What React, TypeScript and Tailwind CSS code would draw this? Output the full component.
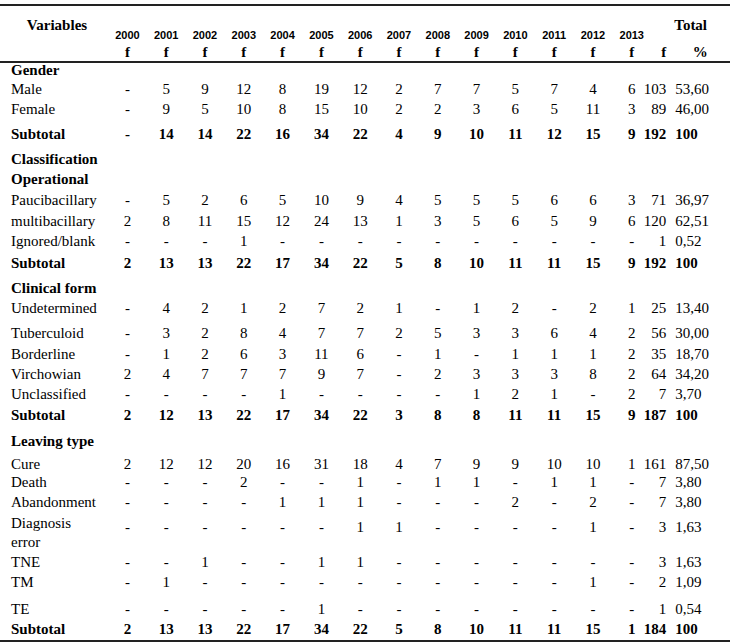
import React from "react";

type Row = {
  label: string;
  label2?: string;
  v?: string[];
  t?: string;
  p?: string;
  bold?: boolean;
  h: string;
  vpt?: string;
};

const d = "-";

const rows: Row[] = [
  { label: "Gender", bold: true, h: "h-[19px]" },
  { label: "Male", v: [d, "5", "9", "12", "8", "19", "12", "2", "7", "7", "5", "7", "4", "6"], t: "103", p: "53,60", h: "h-[20px]" },
  { label: "Female", v: [d, "9", "5", "10", "8", "15", "10", "2", "2", "3", "6", "5", "11", "3"], t: "89", p: "46,00", h: "h-[25px]" },
  { label: "Subtotal", bold: true, v: [d, "14", "14", "22", "16", "34", "22", "4", "9", "10", "11", "12", "15", "9"], t: "192", p: "100", h: "h-[25px]" },
  { label: "Classification", bold: true, h: "h-[20px]" },
  { label: "Operational", bold: true, h: "h-[21px]" },
  { label: "Paucibacillary", v: [d, "5", "2", "6", "5", "10", "9", "4", "5", "5", "5", "6", "6", "3"], t: "71", p: "36,97", h: "h-[21px]" },
  { label: "multibacillary", v: ["2", "8", "11", "15", "12", "24", "13", "1", "3", "5", "6", "5", "9", "6"], t: "120", p: "62,51", h: "h-[20px]" },
  { label: "Ignored/blank", v: [d, d, d, "1", d, d, d, d, d, d, d, d, d, d], t: "1", p: "0,52", h: "h-[22px]" },
  { label: "Subtotal", bold: true, v: ["2", "13", "13", "22", "17", "34", "22", "5", "8", "10", "11", "11", "15", "9"], t: "192", p: "100", h: "h-[25px]" },
  { label: "Clinical form", bold: true, h: "h-[20px]" },
  { label: "Undetermined", v: [d, "4", "2", "1", "2", "7", "2", "1", d, "1", "2", d, "2", "1"], t: "25", p: "13,40", h: "h-[25px]" },
  { label: "Tuberculoid", v: [d, "3", "2", "8", "4", "7", "7", "2", "5", "3", "3", "6", "4", "2"], t: "56", p: "30,00", h: "h-[21px]" },
  { label: "Borderline", v: [d, "1", "2", "6", "3", "11", "6", d, "1", d, "1", "1", "1", "2"], t: "35", p: "18,70", h: "h-[20px]" },
  { label: "Virchowian", v: ["2", "4", "7", "7", "7", "9", "7", d, "2", "3", "3", "3", "8", "2"], t: "64", p: "34,20", h: "h-[20px]" },
  { label: "Unclassified", v: [d, d, d, d, "1", d, d, d, d, "1", "2", "1", d, "2"], t: "7", p: "3,70", h: "h-[21px]" },
  { label: "Subtotal", bold: true, v: ["2", "12", "13", "22", "17", "34", "22", "3", "8", "8", "11", "11", "15", "9"], t: "187", p: "100", h: "h-[26px]" },
  { label: "Leaving type", bold: true, h: "h-[23px]" },
  { label: "Cure", v: ["2", "12", "12", "20", "16", "31", "18", "4", "7", "9", "9", "10", "10", "1"], t: "161", p: "87,50", h: "h-[18px]" },
  { label: "Death", v: [d, d, d, "2", d, d, "1", d, "1", "1", d, "1", "1", d], t: "7", p: "3,80", h: "h-[20px]" },
  { label: "Abandonment", v: [d, d, d, d, "1", "1", "1", d, d, d, "2", d, "2", d], t: "7", p: "3,80", h: "h-[21px]" },
  { label: "Diagnosis", label2: "error", v: [d, d, d, d, d, d, "1", "1", d, d, d, d, "1", d], t: "3", p: "1,63", h: "h-[39px]", vpt: "pt-[4px]" },
  { label: "TNE", v: [d, d, "1", d, d, "1", "1", d, d, d, d, d, d, d], t: "3", p: "1,63", h: "h-[20px]" },
  { label: "TM", v: [d, "1", d, d, d, d, d, d, d, d, d, d, "1", d], t: "2", p: "1,09", h: "h-[27px]" },
  { label: "TE", v: [d, d, d, d, d, "1", d, d, d, d, d, d, d, d], t: "1", p: "0,54", h: "h-[20px]" },
  { label: "Subtotal", bold: true, v: ["2", "13", "13", "22", "17", "34", "22", "5", "8", "10", "11", "11", "15", "1"], t: "184", p: "100", h: "h-[18px]" },
];

const years = ["2000", "2001", "2002", "2003", "2004", "2005", "2006", "2007", "2008", "2009", "2010", "2011", "2012", "2013"];

const GRID = "grid grid-cols-[108px_repeat(14,38.8px)_19px_60px]";

export default function App() {
  return (
    <div className="w-[734px] h-[644px] bg-white text-black font-['Liberation_Serif',serif] text-[15px] leading-[14px]">
      <div className="w-[730px] pt-[4px]">
        <div className="border-t-2 border-[#222]" />
        {/* header row A */}
        <div className={`${GRID} h-[39px] items-start`}>
          <div className="pt-[12px] pl-[6px] text-center font-bold">Variables</div>
          {years.map((y) => (
            <div key={y} className="pt-[22px] text-center font-['Liberation_Sans',sans-serif] font-bold text-[11px] leading-[14px]">
              {y}
            </div>
          ))}
          <div className="col-span-2 pt-[12px] text-center font-bold">Total</div>
        </div>
        {/* header row B */}
        <div className={`${GRID} h-[16px] items-start font-bold`}>
          <div />
          {years.map((y) => (
            <div key={y} className="text-center">f</div>
          ))}
          <div className="flex justify-end pr-[4px]">f</div>
          <div className="text-center">%</div>
        </div>
        <div className="border-t-2 border-[#222]" />
        {rows.map((r, i) => (
          <div key={i} className={`${GRID} ${r.h} items-start ${r.bold ? "font-bold" : ""}`}>
            <div className="pl-[11px] whitespace-nowrap">
              <div>{r.label}</div>
              {r.label2 && <div className="mt-[5px]">{r.label2}</div>}
            </div>
            {r.v &&
              r.v.map((x, j) => (
                <div key={j} className={`text-center ${r.vpt ?? ""}`}>
                  {x}
                </div>
              ))}
            {r.v && (
              <div className={`flex justify-end whitespace-nowrap pr-[4px] ${r.vpt ?? ""}`}>
                <span>{r.t}</span>
              </div>
            )}
            {r.v && <div className={`text-left whitespace-nowrap pl-[5px] ${r.vpt ?? ""}`}>{r.p}</div>}
          </div>
        ))}
        <div className="border-t-2 border-[#222]" />
      </div>
    </div>
  );
}
